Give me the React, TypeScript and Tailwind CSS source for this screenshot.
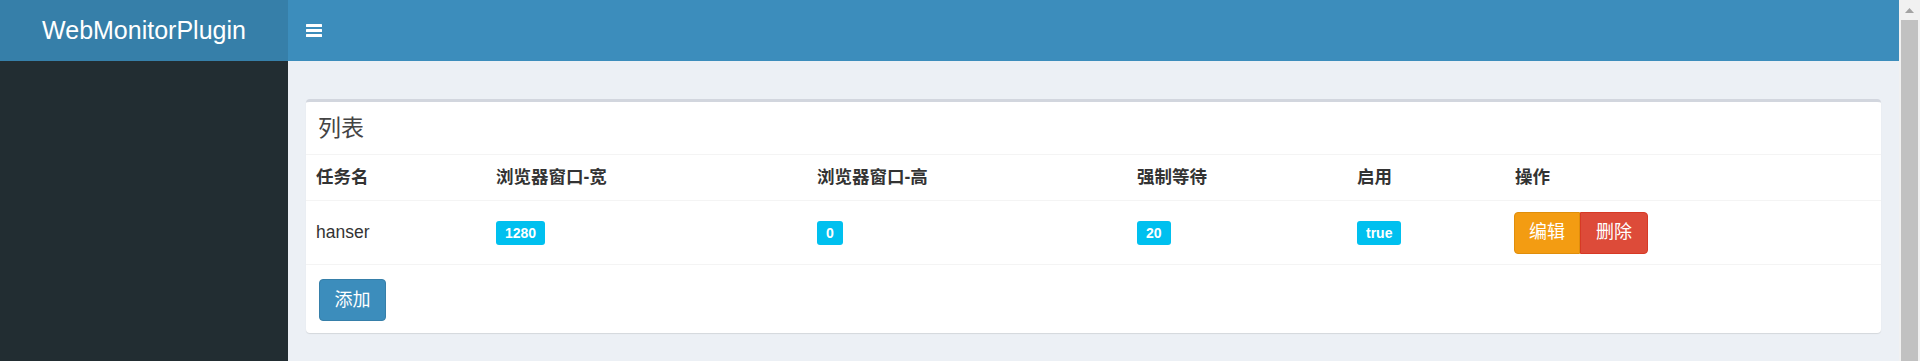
import React from 'react';

const FONT = "font-['Liberation_Sans','Noto_Sans_CJK_SC',sans-serif]";

const columns = ['任务名', '浏览器窗口-宽', '浏览器窗口-高', '强制等待', '启用', '操作'];

const tasks = [{ name: 'hanser', width: '1280', height: '0', wait: '20', enabled: 'true' }];

const Badge: React.FC<{ children: React.ReactNode }> = ({ children }) => (
  <span className="inline-block rounded-[3px] bg-[#00c0ef] px-[9px] pt-[4px] pb-[4px] text-[14px] leading-[16px] font-bold text-white">
    {children}
  </span>
);

const Bars = () => (
  <svg width="16" height="13" viewBox="0 0 16 13" fill="white">
    <rect x="0" y="0" width="16" height="3" rx="0.5" />
    <rect x="0" y="5" width="16" height="3" rx="0.5" />
    <rect x="0" y="10" width="16" height="3" rx="0.5" />
  </svg>
);

export default function App() {
  return (
    <div className={`flex h-[361px] w-[1920px] overflow-hidden ${FONT}`}>
      <div className="flex min-w-0 flex-1 flex-col">
        {/* top bar */}
        <div className="flex h-[61px] shrink-0">
          <div className="flex w-[288px] items-center justify-center bg-[#367fa9] text-[25px] text-white">
            WebMonitorPlugin
          </div>
          <div className="flex flex-1 items-center bg-[#3c8dbc] pl-[18px]">
            <Bars />
          </div>
        </div>

        <div className="flex flex-1">
          <div className="w-[288px] bg-[#222d32]" />
          <div className="flex-1 bg-[#ecf0f5] px-[18px] pt-[38px]">
            {/* box */}
            <div className="rounded-[4px] border-t-[3px] border-[#d2d6de] bg-white shadow-[0_1px_1px_rgba(0,0,0,0.1)]">
              <div className="flex h-[53px] items-center border-b border-[#f4f4f4] px-[12px] text-[23px] text-[#444]">
                列表
              </div>

              <div className="grid grid-cols-[180px_321px_320px_220px_158px_1fr] text-[17.5px] text-[#333]">
                {columns.map((c) => (
                  <div key={c} className="flex h-[46px] items-center border-b border-[#f4f4f4] px-[10px] font-bold">
                    {c}
                  </div>
                ))}
                {tasks.map((t) => (
                  <React.Fragment key={t.name}>
                    <div className="flex h-[64px] items-center border-b border-[#f4f4f4] px-[10px]">{t.name}</div>
                    <div className="flex h-[64px] items-center border-b border-[#f4f4f4] px-[10px]">
                      <Badge>{t.width}</Badge>
                    </div>
                    <div className="flex h-[64px] items-center border-b border-[#f4f4f4] px-[10px]">
                      <Badge>{t.height}</Badge>
                    </div>
                    <div className="flex h-[64px] items-center border-b border-[#f4f4f4] px-[10px]">
                      <Badge>{t.wait}</Badge>
                    </div>
                    <div className="flex h-[64px] items-center border-b border-[#f4f4f4] px-[10px]">
                      <Badge>{t.enabled}</Badge>
                    </div>
                    <div className="flex h-[64px] items-center border-b border-[#f4f4f4] px-[9px]">
                      <button className="h-[42px] w-[66px] rounded-l-[4px] border border-[#e08e0b] bg-[#f39c12] text-[18px] text-white">
                        编辑
                      </button>
                      <button className="h-[42px] w-[68px] rounded-r-[4px] border border-[#d73925] bg-[#dd4b39] text-[18px] text-white">
                        删除
                      </button>
                    </div>
                  </React.Fragment>
                ))}
              </div>

              <div className="px-[13px] pt-[14px] pb-[12px]">
                <button className="h-[42px] w-[67px] rounded-[4px] border border-[#367fa9] bg-[#3c8dbc] text-[18px] text-white">
                  添加
                </button>
              </div>
            </div>
          </div>
        </div>
      </div>

      {/* scrollbar */}
      <div className="flex w-[21px] shrink-0 flex-col bg-[#f1f1f1] px-[2px]">
        <div className="flex h-[20px] items-center justify-center">
          <svg width="9" height="5" viewBox="0 0 9 5">
            <polygon points="0,5 4.5,0 9,5" fill="#a3a3a3" />
          </svg>
        </div>
        <div className="flex-1 bg-[#c1c1c1]" />
      </div>
    </div>
  );
}
